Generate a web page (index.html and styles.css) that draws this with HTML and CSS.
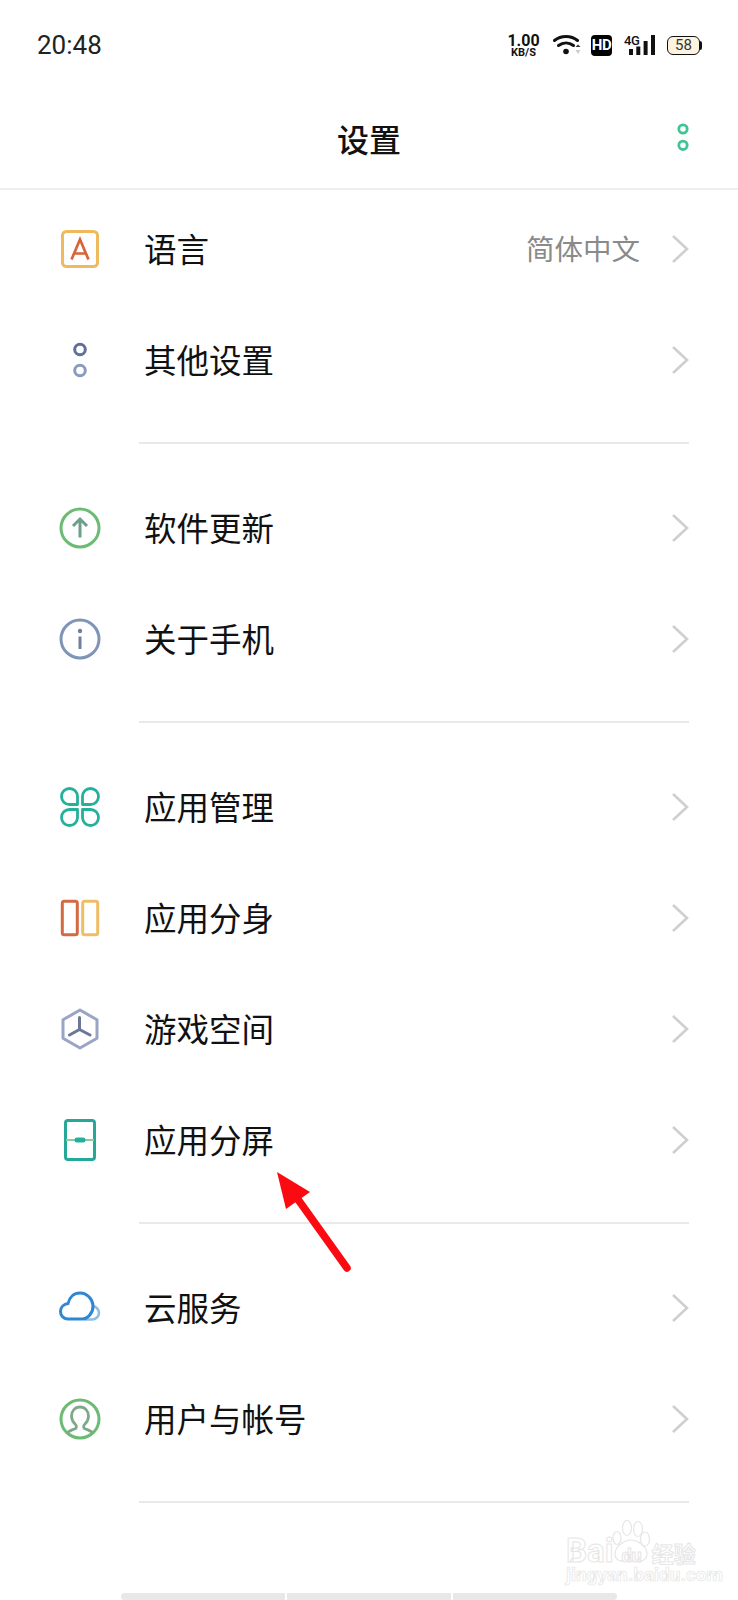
FILE: index.html
```html
<!DOCTYPE html>
<html lang="zh-CN">
<head>
<meta charset="utf-8">
<title>设置</title>
<link rel="stylesheet" href="styles.css">
</head>
<body>
<div class="page">
  <div class="status">
    <span class="time">20:48</span>
    <div class="status-icons">
      <div class="speed"><span class="speed-n">1.00</span><span class="speed-u">KB/S</span></div>
      <svg class="si-wifi" width="28" height="22" viewBox="0 0 28 22"><g fill="none" stroke="#111" stroke-width="3" stroke-linecap="round"><path d="M1.5 6.500C8 1 18 1 24.500 6.500"/><path d="M5.500 11.500C10 8 16 8 20.500 11.500"/></g><circle cx="13" cy="17.500" r="2.800" fill="#111"/><path d="M22.500 13l2.500-2.500 2.500 2.500z" fill="#333"/><path d="M22.500 16h5l-2.500 4z" fill="#ccc"/></svg>
      <div class="hd">HD</div>
      <div class="signal"><span class="g4">4G</span>
        <svg width="26" height="20" viewBox="0 0 26 20"><g fill="#111"><rect x="0" y="14" width="4" height="6"/><rect x="7.300" y="11.500" width="4" height="8.500"/><rect x="14.600" y="6" width="4" height="14"/><rect x="22" y="0" width="4" height="20"/></g></svg>
      </div>
      <div class="battery"><span class="batt-body">58</span><span class="batt-cap"></span></div>
    </div>
  </div>

  <header class="head">
    <h1 class="title">设置</h1>
    <svg class="more" width="14" height="30" viewBox="0 0 14 30"><g fill="none" stroke="#3fc594" stroke-width="2.800"><circle cx="7" cy="7" r="4.200"/><circle cx="7" cy="23.300" r="4.200"/></g></svg>
  </header>

  <main class="list">
    <section class="group">
      <div class="row">
        <svg class="icon" width="44" height="44" viewBox="0 0 44 44"><rect x="4.500" y="4.500" width="35" height="35" rx="4" fill="none" stroke="#efb95e" stroke-width="3"/><path d="M13.500 32.500L22 12.500 30.500 32.500M16.500 26.500h11" fill="none" stroke="#d8643a" stroke-width="2.700"/></svg>
        <span class="label">语言</span><span class="value">简体中文</span>
        <svg class="chev" width="18" height="30" viewBox="0 0 18 30"><path d="M2 2l14 13L2 28" fill="none" stroke="#cfcfcf" stroke-width="2.600"/></svg>
      </div>
      <div class="row">
        <svg class="icon" width="44" height="44" viewBox="0 0 44 44"><g fill="none" stroke-width="3"><circle cx="22" cy="11.500" r="5.300" stroke="#5f7099"/><circle cx="22" cy="32.500" r="5.300" stroke="#8a9bbd"/></g></svg>
        <span class="label">其他设置</span>
        <svg class="chev" width="18" height="30" viewBox="0 0 18 30"><path d="M2 2l14 13L2 28" fill="none" stroke="#cfcfcf" stroke-width="2.600"/></svg>
      </div>
    </section>

    <section class="group">
      <div class="row">
        <svg class="icon" width="44" height="44" viewBox="0 0 44 44"><circle cx="22" cy="22" r="19" fill="none" stroke="#6cbb72" stroke-width="3"/><path d="M22 31.500V13M15 20l7-7 7 7" fill="none" stroke="#6f9f8c" stroke-width="3"/></svg>
        <span class="label">软件更新</span>
        <svg class="chev" width="18" height="30" viewBox="0 0 18 30"><path d="M2 2l14 13L2 28" fill="none" stroke="#cfcfcf" stroke-width="2.600"/></svg>
      </div>
      <div class="row">
        <svg class="icon" width="44" height="44" viewBox="0 0 44 44"><circle cx="22" cy="22" r="19" fill="none" stroke="#7f95b8" stroke-width="3"/><circle cx="22" cy="14" r="2.200" fill="#6f7f9c"/><path d="M22 19.500V32" stroke="#6f7f9c" stroke-width="3"/></svg>
        <span class="label">关于手机</span>
        <svg class="chev" width="18" height="30" viewBox="0 0 18 30"><path d="M2 2l14 13L2 28" fill="none" stroke="#cfcfcf" stroke-width="2.600"/></svg>
      </div>
    </section>

    <section class="group">
      <div class="row">
        <svg class="icon" width="44" height="44" viewBox="0 0 44 44"><g fill="none" stroke="#25b09c" stroke-width="2.800" stroke-linejoin="round"><path d="M19.500 19.500H11.500A8 8 0 1 1 19.500 11.500Z"/><path d="M24.500 19.500H32.500A8 8 0 1 0 24.500 11.500Z"/><path d="M19.500 24.500H11.500A8 8 0 1 0 19.500 32.500Z"/><path d="M24.500 24.500H32.500A8 8 0 1 1 24.500 32.500Z"/></g></svg>
        <span class="label">应用管理</span>
        <svg class="chev" width="18" height="30" viewBox="0 0 18 30"><path d="M2 2l14 13L2 28" fill="none" stroke="#cfcfcf" stroke-width="2.600"/></svg>
      </div>
      <div class="row">
        <svg class="icon" width="44" height="44" viewBox="0 0 44 44"><rect x="4.300" y="5.300" width="15" height="33.500" rx="2" fill="none" stroke="#d36a42" stroke-width="3"/><rect x="24.700" y="5.300" width="15" height="33.500" rx="2" fill="none" stroke="#efbd66" stroke-width="3"/></svg>
        <span class="label">应用分身</span>
        <svg class="chev" width="18" height="30" viewBox="0 0 18 30"><path d="M2 2l14 13L2 28" fill="none" stroke="#cfcfcf" stroke-width="2.600"/></svg>
      </div>
      <div class="row">
        <svg class="icon" width="44" height="44" viewBox="0 0 44 44"><path d="M22 3L39 12.800V31.200L22 41 5 31.200V12.800z" fill="none" stroke="#9aa4c4" stroke-width="3" stroke-linejoin="round"/><path d="M21.500 10.500V22.500M21.500 22.500L11.500 28M21.500 22.500l10.500 5.500" fill="none" stroke="#6b7796" stroke-width="3" stroke-linecap="round"/></svg>
        <span class="label">游戏空间</span>
        <svg class="chev" width="18" height="30" viewBox="0 0 18 30"><path d="M2 2l14 13L2 28" fill="none" stroke="#cfcfcf" stroke-width="2.600"/></svg>
      </div>
      <div class="row">
        <svg class="icon" width="44" height="44" viewBox="0 0 44 44"><rect x="7.500" y="2.500" width="29" height="39" rx="2.500" fill="none" stroke="#25a898" stroke-width="3"/><path d="M8 22h28" stroke="#8fc9a0" stroke-width="2"/><rect x="16.500" y="19.500" width="11" height="5" rx="2.500" fill="#20b09c"/></svg>
        <span class="label">应用分屏</span>
        <svg class="chev" width="18" height="30" viewBox="0 0 18 30"><path d="M2 2l14 13L2 28" fill="none" stroke="#cfcfcf" stroke-width="2.600"/></svg>
      </div>
    </section>

    <section class="group">
      <div class="row">
        <svg class="icon" width="44" height="44" viewBox="0 0 44 44"><path d="M35.500 20C39 21.500 41 24 41 27C41 30.500 38 33.500 34 33.500H26" fill="none" stroke="#8cbfe3" stroke-width="2.600"/><path d="M10 33C5 33 2.500 29 2.500 25.500C2.500 21 6 18 10 17.500C11.500 11 16 7 22 7C29 7 34.500 13 35 19.500C35.500 26 30 33 24 33Z" fill="none" stroke="#2f86d3" stroke-width="3"/></svg>
        <span class="label">云服务</span>
        <svg class="chev" width="18" height="30" viewBox="0 0 18 30"><path d="M2 2l14 13L2 28" fill="none" stroke="#cfcfcf" stroke-width="2.600"/></svg>
      </div>
      <div class="row">
        <svg class="icon" width="44" height="44" viewBox="0 0 44 44"><circle cx="22" cy="22" r="19" fill="none" stroke="#6cbb72" stroke-width="3"/><path d="M9 36.500C11 33 15 33 17.500 31.500C19 30.500 18.500 28.500 17 27C14.500 24.500 13.500 22 13.500 19C13.500 14 17 10 22 10S30.500 14 30.500 19C30.500 22 29.500 24.500 27 27C25.500 28.500 25 30.500 26.500 31.500C29 33 33 33 35 36.500" fill="none" stroke="#7fa88a" stroke-width="2.800"/></svg>
        <span class="label">用户与帐号</span>
        <svg class="chev" width="18" height="30" viewBox="0 0 18 30"><path d="M2 2l14 13L2 28" fill="none" stroke="#cfcfcf" stroke-width="2.600"/></svg>
      </div>
    </section>
  </main>

  <div class="home-bar"><span></span><span></span><span></span></div>

  <svg class="arrow" width="90" height="110" viewBox="0 0 90 110"><path d="M2 2L35 22 11 39z" fill="#fb0a12"/><path d="M22 28L72 98" stroke="#fb0a12" stroke-width="7.500" stroke-linecap="round"/></svg>

  <div class="mark">
    <svg class="paw" width="38" height="43" viewBox="0 0 38 43"><g fill="#fff" stroke="#e6e6e6" stroke-width="1.200"><ellipse cx="15" cy="8" rx="4.500" ry="7.500"/><ellipse cx="26" cy="9" rx="4.500" ry="7.500"/><ellipse cx="5" cy="18" rx="4" ry="6.500"/><ellipse cx="33" cy="19" rx="4.500" ry="7"/><path d="M3 34C3 26 13 20 19 20C25 20 35 26 35 34C35 42 26 42 19 41C12 42 3 42 3 34z"/></g></svg>
    <div class="mark-line"><span class="mark-bai">Bai</span><span class="mark-du">du</span><span class="mark-cn">经验</span></div>
    <div class="mark-url">jingyan.baidu.com</div>
  </div>
</div>
</body>
</html>
```
FILE: styles.css
```css
* { box-sizing: border-box; }
html, body { margin: 0; padding: 0; background: #fff; }
body { font-family: "Noto Sans CJK SC", "Roboto", "Noto Sans", sans-serif; color: #111; }
.page { position: relative; width: 738px; height: 1600px; overflow: hidden; display: flex; flex-direction: column; }

.status { height: 90px; display: flex; align-items: center; justify-content: space-between; padding: 0 36px 0 37px; flex: none; }
.time { font-family: Roboto, sans-serif; font-size: 26px; color: #222; }
.status-icons { display: flex; align-items: center; }
.speed { display: flex; flex-direction: column; align-items: center; font-family: Roboto, sans-serif; font-weight: 700; line-height: 1; width: 33px; margin-right: 13px; }
.speed-n { font-size: 16px; line-height: 15px; }
.speed-u { font-size: 11px; line-height: 10px; }
.si-wifi { margin-right: 10px; }
.hd { width: 21px; height: 21px; background: #000; color: #fff; border-radius: 4px; font: 700 15px/21px Roboto, sans-serif; text-align: center; letter-spacing: -0.500px; margin-right: 12px; }
.signal { height: 20px; position: relative; width: 31px; margin-right: 12px; }
.signal svg { position: absolute; right: 0; top: 0; }
.g4 { position: absolute; left: 0; top: -1px; font: 500 13px/13px Roboto, sans-serif; letter-spacing: -0.500px; background: #fff; padding-right: 2px; }
.battery { display: flex; align-items: center; }
.batt-body { width: 33px; height: 19px; border: 1.800px solid #111; border-radius: 6px; background: #fdf3df; font: 400 15px/16px Roboto, sans-serif; text-align: center; color: #333; }
.batt-cap { width: 2px; height: 9px; background: #111; border-radius: 0 2px 2px 0; }

.head { height: 100px; flex: none; display: flex; align-items: center; justify-content: center; position: relative; border-bottom: 2px solid #eeeeee; }
.title { margin: 0 0 3px; font-size: 32px; font-weight: 500; line-height: 1; color: #111; }
.more { position: absolute; right: 48px; top: 32px; }

.list { flex: none; padding: 3px 0 0; }
.group { padding: 0 49px 29px 58px; position: relative; margin-bottom: 28px; }
.group::after { content: ""; position: absolute; left: 139px; right: 49px; bottom: 0; height: 2px; background: #e9e9e9; }
.row { height: 111px; display: flex; align-items: center; }
.icon { flex: none; margin-right: 42px; }
.label { flex: 1; font-size: 32.500px; line-height: 1; color: #111; margin-bottom: 1px; }
.value { font-size: 28.500px; line-height: 1; color: #8a8a8a; margin-right: 31px; margin-bottom: 1px; }
.chev { flex: none; }

.home-bar { position: absolute; left: 121px; top: 1593px; width: 496px; height: 7px; display: flex; gap: 2px; }
.home-bar span { flex: 1; background: #e8e8e8; }
.home-bar span:first-child { border-radius: 4px 0 0 4px; }
.home-bar span:last-child { border-radius: 0 4px 4px 0; }

.arrow { position: absolute; left: 275px; top: 1170px; }

.mark { position: absolute; left: 566px; top: 1520px; width: 170px; height: 72px; color: #fff; }
.paw { position: absolute; left: 46px; top: 0; }
.mark-line { position: absolute; left: 0; top: 14px; display: flex; align-items: baseline; }
.mark-bai, .mark-du, .mark-cn { font-family: Roboto, sans-serif; -webkit-text-stroke: 1px #e6e6e6; color: #fff; }
.mark-bai { font-size: 33px; font-weight: 700; line-height: 1; }
.mark-du { font-size: 18px; font-weight: 700; position: relative; margin: 0 10px 0 8px; }
.mark-cn { font-family: "Noto Sans CJK SC", sans-serif; font-size: 22px; line-height: 1; font-weight: 700; }
.mark-url { position: absolute; left: 0; top: 44px; font: 700 19px/22px Roboto, sans-serif; -webkit-text-stroke: 0.700px #e6e6e6; color: #fff; white-space: nowrap; }
```
